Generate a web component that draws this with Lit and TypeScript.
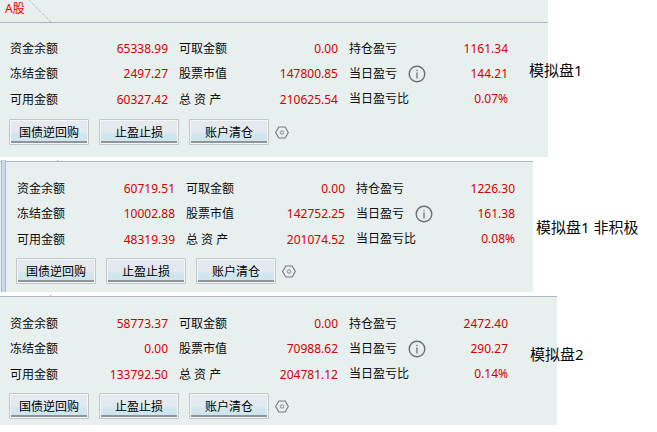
import { LitElement, html, css, svg } from "lit";
import { customElement, property } from "lit/decorators.js";

interface Account {
  name: string;
  cash: string;
  drawable: string;
  holdingPl: string;
  frozen: string;
  stockValue: string;
  todayPl: string;
  available: string;
  total: string;
  todayPct: string;
  width: number;
  gap: number;
  bottom: number;
  inset: number;
  rowsTop: number;
  labelShift: number;
  labelTop: number;
  tick: number;
  strip?: boolean;
  tab?: boolean;
}

const ACCOUNTS: Account[] = [
  { name: "模拟盘1", cash: "65338.99", drawable: "0.00", holdingPl: "1161.34", frozen: "2497.27", stockValue: "147800.85", todayPl: "144.21", available: "60327.42", total: "210625.54", todayPct: "0.07%", width: 548, gap: 0, bottom: 12, inset: 10, rowsTop: 13, labelShift: -19, labelTop: 60, tick: 0, tab: true },
  { name: "模拟盘1 非积极", cash: "60719.51", drawable: "0.00", holdingPl: "1226.30", frozen: "10002.88", stockValue: "142752.25", todayPl: "161.38", available: "48319.39", total: "201074.52", todayPct: "0.08%", width: 533, gap: 4, bottom: 8, inset: 17, rowsTop: 14, labelShift: 3, labelTop: 60, tick: 57, strip: true },
  { name: "模拟盘2", cash: "58773.37", drawable: "0.00", holdingPl: "2472.40", frozen: "0.00", stockValue: "70988.62", todayPl: "290.27", available: "133792.50", total: "204781.12", todayPct: "0.14%", width: 557, gap: 4, bottom: 6, inset: 10, rowsTop: 14, labelShift: -27, labelTop: 52, tick: 50 },
];

const infoIcon = svg`<svg width="18" height="18" viewBox="0 0 18 18">
  <circle cx="9" cy="9" r="7.8" fill="none" stroke="#6f6f6f" stroke-width="1.4"></circle>
  <rect x="8.4" y="4.8" width="1.2" height="1.3" fill="#666"></rect>
  <rect x="8.4" y="7.4" width="1.2" height="6" fill="#666"></rect>
</svg>`;

const gearIcon = svg`<svg width="14" height="13" viewBox="0 0 14 13">
  <path d="M3.8 1H10.2L13.3 6.5L10.2 12H3.8L.7 6.5Z" fill="none" stroke="#777" stroke-width="1.1"></path>
  <circle cx="7" cy="6.5" r="1.7" fill="none" stroke="#888" stroke-width="1"></circle>
</svg>`;

@customElement("account-panel")
class AccountPanel extends LitElement {
  @property({ attribute: false }) account!: Account;

  static styles = css`
    :host {
      display: flex;
      align-items: flex-start;
      font-family: "Noto Sans", "Noto Sans CJK SC", sans-serif;
    }
    .panel {
      position: relative;
      flex: none;
      box-sizing: border-box;
      background: #e8f0ef;
    }
    .tabbar {
      position: relative;
      height: 22px;
      color: #f00000;
      font-size: 12px;
      line-height: 18px;
      padding-left: 5px;
    }
    .tabbar svg {
      position: absolute;
      left: 28px;
      top: 0;
    }
    .body {
      border-top: 1px solid #aab6c2;
    }
    .tick {
      position: absolute;
      top: -1px;
      width: 1px;
      height: 1px;
      background: #aab0b4;
    }
    .strip {
      position: absolute;
      left: 1px;
      top: -1px;
      bottom: 0;
      width: 5px;
      background: #c7daee;
      border-left: 1px solid #aebccc;
      border-right: 1px solid #aebccc;
      box-sizing: border-box;
    }
    .grid {
      box-sizing: border-box;
      height: 89px;
      display: grid;
      grid-template-columns: 158px 159px 159px;
      grid-template-rows: 25px 25px 26px;
      column-gap: 11px;
      font-size: 12px;
      line-height: 25px;
      color: #0a0a0a;
    }
    .cell {
      display: flex;
      align-items: center;
      justify-content: space-between;
    }
    .cell.raised {
      padding-bottom: 2px;
    }
    .num {
      color: #d00000;
      margin-left: auto;
    }
    .info {
      display: flex;
      margin-left: 11px;
    }
    .actions {
      display: flex;
      align-items: center;
      gap: 10px;
      margin: 7px 0 0 -1px;
    }
    button {
      box-sizing: border-box;
      width: 80px;
      height: 26px;
      padding: 0 0 1px;
      font-family: "Noto Sans CJK SC", sans-serif;
      font-size: 12px;
      color: #000;
      border: 1px solid #c6c6c6;
      box-shadow: inset 0 0 0 1px #f4f6f7, inset 0 -3px 0 #8e9498;
      border-radius: 1px;
      background: linear-gradient(#e4e9f0 0 48%, #cfe6ef 62% 100%);
    }
    .gear {
      display: flex;
      margin-left: -4px;
    }
    .label {
      position: relative;
      flex: none;
      font-size: 15px;
      line-height: 20px;
      color: #0a0a0a;
      white-space: nowrap;
    }
  `;

  render() {
    const a = this.account;
    return html`
      <div class="panel" style="width:${a.width}px;margin-top:${a.gap}px;padding-bottom:${a.bottom}px">
        ${a.strip ? html`<div class="strip"></div>` : ""}
        ${a.tab
          ? html`<div class="tabbar">
              A股
              <svg width="24" height="22" viewBox="0 0 24 22"><path d="M1 0L23 22" stroke="#a4aeb4" stroke-width="1" fill="none" stroke-dasharray="1 1"></path></svg>
            </div>`
          : ""}
        ${a.tick ? html`<div class="tick" style="left:${a.tick}px"></div>` : ""}
        <div class="body" style="padding-left:${a.inset}px">
          <div class="grid" style="padding-top:${a.rowsTop}px">
            <div class="cell"><span>资金余额</span><span class="num">${a.cash}</span></div>
            <div class="cell"><span>可取金额</span><span class="num">${a.drawable}</span></div>
            <div class="cell"><span>持仓盈亏</span><span class="num">${a.holdingPl}</span></div>
            <div class="cell"><span>冻结金额</span><span class="num">${a.frozen}</span></div>
            <div class="cell"><span>股票市值</span><span class="num">${a.stockValue}</span></div>
            <div class="cell"><span>当日盈亏</span><span class="info">${infoIcon}</span><span class="num">${a.todayPl}</span></div>
            <div class="cell"><span>可用金额</span><span class="num">${a.available}</span></div>
            <div class="cell"><span>总 资 产</span><span class="num">${a.total}</span></div>
            <div class="cell raised"><span>当日盈亏比</span><span class="num">${a.todayPct}</span></div>
          </div>
          <div class="actions">
            <button>国债逆回购</button>
            <button>止盈止损</button>
            <button>账户清仓</button>
            <span class="gear">${gearIcon}</span>
          </div>
        </div>
      </div>
      <div class="label" style="margin-left:${a.labelShift}px;margin-top:${a.labelTop}px">${a.name}</div>
    `;
  }
}

@customElement("app-root")
export class AppRoot extends LitElement {
  static styles = css`
    :host {
      display: block;
      width: 657px;
      height: 432px;
      overflow: hidden;
      background: #fff;
    }
  `;

  render() {
    return html`${ACCOUNTS.map((a) => html`<account-panel .account=${a}></account-panel>`)}`;
  }
}

export { AccountPanel };
